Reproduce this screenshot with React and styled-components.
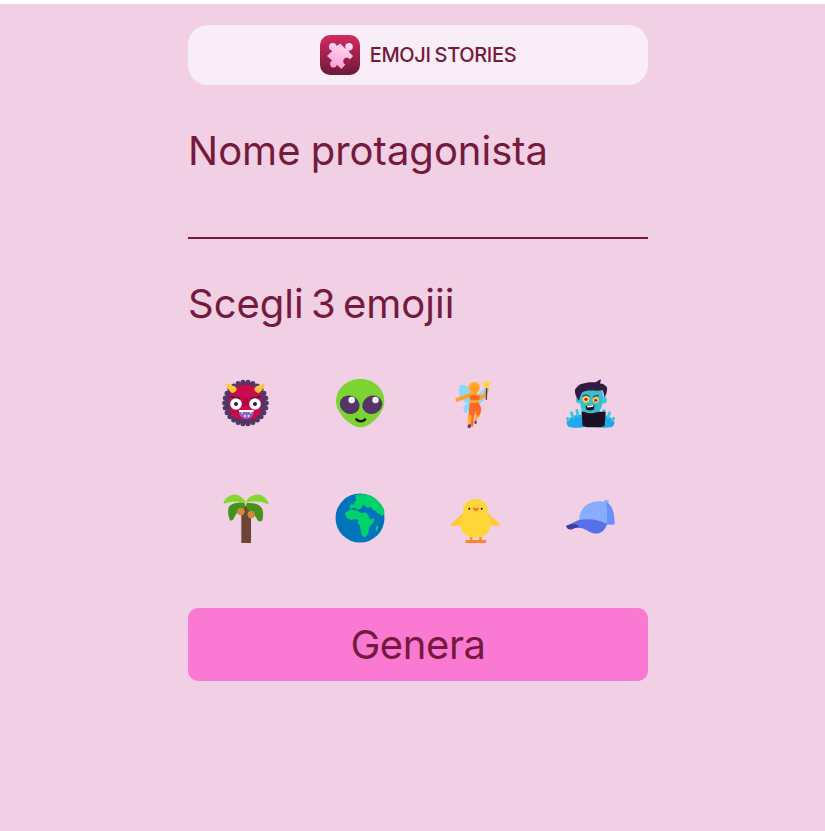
import React from "react"
import styled, { createGlobalStyle } from "styled-components"

const ink = "#751a3c"

const GlobalStyle = createGlobalStyle`
  html, body {
    margin: 0;
    padding: 0;
    background: #ffffff;
  }
  body {
    font-family: Inter, "Noto Sans", sans-serif;
    color: ${ink};
  }
`

const Page = styled.div`
  box-sizing: border-box;
  margin-top: 4px;
  height: 827px;
  padding: 21px 0 0 11px;
  background: #f1d0e5;
  display: flex;
  justify-content: center;
`

const Column = styled.main`
  width: 460px;
  display: flex;
  flex-direction: column;
`

const Header = styled.header`
  height: 60px;
  border-radius: 20px;
  background: #f9edf7;
  display: flex;
  align-items: center;
  justify-content: center;
  gap: 10px;
`

const Brand = styled.span`
  font-size: 20px;
  font-weight: 500;
  letter-spacing: -0.35px;
  word-spacing: -1px;
`

const Heading = styled.h2`
  margin: ${p => p.$top}px 0 0;
  font-size: 40px;
  line-height: 48px;
  font-weight: 400;
  word-spacing: ${p => p.$words}px;
`

const NameInput = styled.input`
  display: block;
  box-sizing: border-box;
  width: 100%;
  height: 64px;
  padding: 0;
  border: 0;
  border-bottom: 2px solid ${ink};
  background: transparent;
  outline: none;
  font: inherit;
  font-size: 32px;
  color: ${ink};
`

const EmojiGrid = styled.div`
  margin: 17px 0 0 -0.5px;
  display: grid;
  grid-template-columns: repeat(4, 115px);
  grid-auto-rows: 115px;
`

const EmojiButton = styled.button`
  padding: 0;
  border: 0;
  background: transparent;
  cursor: pointer;
  display: flex;
  align-items: center;
  justify-content: center;

  svg {
    display: block;
    width: 50px;
    height: 50px;
  }
`

const Generate = styled.button`
  margin-top: 33px;
  height: 73px;
  border: 0;
  border-radius: 10px;
  background: #fa7ad3;
  color: ${ink};
  font-family: inherit;
  font-size: 40px;
  font-weight: 400;
  letter-spacing: -0.4px;
  cursor: pointer;
`

const Logo = () => (
  <svg width="40" height="40" viewBox="0 0 40 40" aria-hidden="true">
    <defs>
      <linearGradient id="logoBack" x1="0" y1="0" x2="0" y2="1">
        <stop offset="0" stopColor="#d42a60" />
        <stop offset="1" stopColor="#6c1a38" />
      </linearGradient>
      <linearGradient id="logoPiece" gradientUnits="userSpaceOnUse" x1="26" y1="8" x2="16" y2="34">
        <stop offset="0" stopColor="#ffdcf3" />
        <stop offset="1" stopColor="#ff9dd8" />
      </linearGradient>
    </defs>
    <rect width="40" height="40" rx="10" fill="url(#logoBack)" />
    <g fill="url(#logoPiece)">
      <path d="M20 8.500L33 21 21.500 34 7 21z" />
      <circle cx="12.700" cy="11.700" r="3.800" />
      <circle cx="29" cy="11.700" r="3.800" />
      <circle cx="13.500" cy="29" r="3.400" />
      <path d="M12 13l6-3 2 8-8 2zM28 12l2 8-8 0z" />
    </g>
    <circle cx="26.800" cy="26.300" r="3.500" fill="#9c1f4a" />
  </svg>
)

const Ogre = () => (
  <svg viewBox="0 0 50 50" aria-hidden="true">
    <circle cx="25.500" cy="25" r="21" fill="#533566" />
    {Array.from({ length: 26 }, (_, i) => {
      const a = (i / 26) * Math.PI * 2
      return (
        <circle
          key={i}
          cx={25.5 + Math.cos(a) * 20.8}
          cy={25 + Math.sin(a) * 20.8}
          r="2.500"
          fill="#533566"
        />
      )
    })}
    <path fill="#ca0b4a" d="M10 14c3-5 9-7 15.500-7S38 9 41 14c.5 6 .3 16-.5 20-1 5-6 7.500-15 7.500S11.500 39 10.500 34C9.700 30 9.500 20 10 14z" />
    <path fill="#a8093f" d="M23.500 20h4l2.500 8h-9z" />
    <path fill="#ffc83d" d="M6 5l9 3.500c1 .8 1.800 2 1.700 3.200-.8 1.700-2.400 3.100-4.700 3.300C8.500 12.500 6.700 9 6 5zM45 5l-9 3.500c-1 .8-1.800 2-1.700 3.200.8 1.700 2.400 3.100 4.700 3.300 3.500-2.500 5.300-6 6-10z" />
    <path fill="none" stroke="#321b41" strokeWidth="1.300" d="M10.500 18.500l10 2M40.500 18.500l-10 2" />
    <circle cx="16" cy="26" r="5.800" fill="#fff" />
    <circle cx="35" cy="26" r="5.800" fill="#fff" />
    <circle cx="16" cy="26" r="2" fill="#321b41" />
    <circle cx="35" cy="26" r="2" fill="#321b41" />
    <path fill="#8d65c5" d="M19 32.500h14.500c.5 4-2 8.500-7.200 8.500S18.500 36.500 19 32.500z" />
    <path fill="#fff" d="M19 32h14.500v2H31.500l-.7 2-.8-2H23l-.8 2-.7-2H19z" />
    <circle cx="25" cy="38" r="1" fill="#f4f4f4" />
    <circle cx="28.500" cy="38" r="1" fill="#f4f4f4" />
  </svg>
)

const Alien = () => (
  <svg viewBox="0 0 50 50" aria-hidden="true">
    <path fill="#7bd431" d="M25.500 1C39 1 49.300 10.500 49.300 23.500c0 12-14.500 25.800-23.800 25.800S1 35.500 1 23.500C1 10.500 12 1 25.500 1z" />
    <ellipse cx="14.700" cy="26.700" rx="10.200" ry="9" fill="#533566" transform="rotate(28 14.700 26.700)" />
    <ellipse cx="37.300" cy="26.700" rx="10.200" ry="9" fill="#533566" transform="rotate(-28 37.300 26.700)" />
    <circle cx="16.700" cy="22" r="3.200" fill="#fff" />
    <circle cx="40.500" cy="22" r="3.200" fill="#fff" />
    <path fill="none" stroke="#1c1024" strokeWidth="2.600" strokeLinecap="round" d="M21.500 41.500c2.500 2.300 6 2.300 8.500 0" />
  </svg>
)

const Fairy = () => (
  <svg viewBox="0 0 50 50" aria-hidden="true">
    <path fill="#8ad9fb" d="M10 7c6-1 11 3 13 12l-1 7c-5 0-11-3-12.500-9C9 13 9 10 10 7z" />
    <path fill="#8ad9fb" d="M36 9c-3 3-7 6-9 10l1 7c4-1 7-4 8-8 .500-3 .5-6 0-9z" />
    <path fill="#8ad9fb" d="M20 25l-4 1c-3 2-3.500 6-1 9 2 .5 4-2 5-5z" />
    <path fill="#ffb02e" d="M18.500 9.500c0-3.500 2.800-5.500 5.800-5.500s5.700 2 5.700 5.500-2.500 4.500-3.500 6h-4.500c-1-1.500-3.500-2.500-3.500-6z" />
    <circle cx="24.300" cy="10.500" r="4.200" fill="#ff9f2e" />
    <path fill="#ff9f2e" d="M21.500 14.500h5.500l1 3.500 6-2 2.500-5.500 2.500.6-3 8.500-7.500 3-.8 3.500h-7.500l-.7-6.500-13 4.500-1.200-3.500 13.200-5z" />
    <path fill="#ff6723" d="M19.500 17.500h10.500l-1 5h-8.500zM19.800 24.500h9l.5 1.500c1.700 2 2.200 5 1.700 7.500l-2.400 6-3-.5.800-6.500-2.500 6-.7 10-3.700-.5-.7-9c-.2-4 .3-9 1-14.500z" />
    <path fill="#ffb02e" d="M20 22.500h9v2h-9zM18 36.500l3.700 0-.8 11-3-.2zM25.500 37l3 .6-2 5.500-2-.5z" />
    <path fill="#533566" d="M18 46.500h3l-.3 3.200h-3.200zM24.800 42.500l2 .5-.5 3-2-.5z" />
    <path fill="#ffd637" d="M36.500 1.500l1.500 3 3.300.5-2.400 2.300.6 3.200-3-1.600-3 1.600.6-3.200-2.400-2.300 3.300-.5z" />
    <path fill="#533566" d="M36 10h1.300l-.3 12h-1.200z" />
  </svg>
)

const Zombie = () => (
  <svg viewBox="0 0 50 50" aria-hidden="true">
    <path fill="#1fa9ec" d="M2 43c3-4 9-7 15-6l4 8-1 4c-5 1-12 1-16 0-2-1.500-3-4-2-6zM49 43c-3-4-9-7-15-6l-4 8 1 4c5 1 12 1 16 0 2-1.500 3-4 2-6z" />
    <path fill="none" stroke="#3dc8dc" strokeWidth="3" strokeLinecap="round" d="M3.500 42l-1-1.500M8 39l-1.500-4M13 37.500l-1-5M18 38l-.5-5M47.500 42l1-1.500M43 39l1.500-4M38 37.500l1-5M33 38l.5-5" />
    <path fill="#1c1024" d="M16.700 33.700h24l-1 14-4 1.600H21.500l-4-1.600z" />
    <circle cx="14.300" cy="22" r="3.600" fill="#3dc8dc" />
    <circle cx="38.300" cy="22" r="3.600" fill="#3dc8dc" />
    <path fill="#38bfcb" d="M15.500 10c6-3.500 17-3.500 21.500.5 1 5 1 13 0 17-.7 4-3.500 7.700-10.800 7.700-7 0-10-3-10.700-7.500-.7-5-1-12.700 0-17.700z" />
    <path fill="#321b41" d="M14 23c-2-2.500-4.500-7-4-11 .3-2 2.500-3 3.500-4.500 3-2.500 6.500-2 9.500-3 3-1 6 .5 8-.500 2-1 3-2.500 5-2.500l-1 4c3 0 6 2 7 4 .5 3-1 8-2.500 10-.5-3-1-6-2-7.500-3 1-7 .5-12 .5-3.500 0-6 .5-8.500 2-1.200 2.500-2.500 5.500-3 8.500z" />
    <circle cx="21" cy="21.300" r="3.400" fill="#ffd637" />
    <circle cx="21" cy="21.300" r="1.600" fill="#ca0b4a" />
    <circle cx="30.700" cy="22" r="3" fill="#ffd637" />
    <circle cx="30.700" cy="22.300" r="1.500" fill="#ca0b4a" />
    <path fill="none" stroke="#533566" strokeWidth="1.200" d="M17.500 18.500c2-1.500 5-1.500 7 0M28 19.500c2-2 4.500-2.500 6-1.500" />
    <path fill="#1c1024" d="M20.500 28l9-1.300-.5 5c-2.500 1-5.500 1-7.500 0z" />
    <path fill="#fff" d="M22 28l6.500-1-.3 1.800-5.700.7z" />
  </svg>
)

const Palm = () => (
  <svg viewBox="0 0 50 50" aria-hidden="true">
    <path fill="#6d4534" d="M21.300 13h9.700v37h-9.700z" />
    <path fill="#44911b" d="M24 9.500c-6-.5-11 .5-14 3-3 3.500-2 9.500 0 15 1.700.3 3-.5 4-2 1-4 5-8 10-10 2-2 1.500-4.500 0-6zM27 10c5-.500 10 .5 13.500 3.500 3 3 3 8 2 13.500-1 1.500-3 1.800-4.500.8-2-4-5.500-8.500-10-10.800-2-1.500-2.500-5 -1-7z" />
    <path fill="#86d72f" d="M3.500 10c1-4 5-7.500 10-8.500 4-.5 9 2 11.500 6.500l.5 2.500C19 8 11 8 5 10.500c-1 .3-1.500 .2-1.500-.5zM26 10l.3-2c3-4.500 8-7 12.500-6.500 5 1 9 5 9.700 9 0 .7-.5.800-1.500.5C41 8 33 8 26 10z" />
    <circle cx="21" cy="18.500" r="3.700" fill="#d3883e" />
    <circle cx="31.200" cy="21.500" r="3.700" fill="#d3883e" />
  </svg>
)

const Earth = () => (
  <svg viewBox="0 0 50 50" aria-hidden="true">
    <circle cx="25" cy="25" r="24.500" fill="#0074ba" />
    <path fill="#00d26a" d="M20 2c4-1.200 12-1.200 16 1 5 2.500 10 7 12.500 12 .8 2 1 4 1 6l-2.500 2-2-2-3-1-1-2-3-1-1.500-2.500h-5l-2-2.500-2 .5-1.500 3-3 1-4.500-2-3 1.500-1-2.500 2-2.500 3 .5-.5-2.500 2.500-1.500z" />
    <path fill="#00d26a" d="M10 20l5.500-3.500 7 1 3 2.500 4.500-.5 2.500 1.500 2.500 5c1.500.5 3 0 4-1.500l.5 2c-1 3.500-3.500 5-5 7.500-1 2.500-.5 5-2 7.500l-2 2.500-3-.5-1.500-4-1-7-2-2.500.5-3-3-1-4.500 1-4-2-2-4z" />
    <path fill="#00d26a" d="M42 31.500l1.500 3-1.500 4-1.500-2z" />
  </svg>
)

const Chick = () => (
  <svg viewBox="0 0 50 50" aria-hidden="true">
    <path fill="#ffc83d" d="M13.500 19.500L1 31c-.8 1-.5 2 1 2 4 .2 8-.5 11-2.500zM37.500 19.500L50 31c.8 1 .5 2-1 2-4 .2-8-.5-11-2.500z" />
    <path fill="#ff822d" d="M20 42h2.400v6H20zM29.200 42h2.500v6h-2.500z" />
    <path fill="#ff822d" d="M16 47h19.500c.8 0 1 3 0 3H16c-1 0-1-3 0-3z" />
    <path fill="#ffd637" d="M25.500 6c6.800 0 12.200 4.700 12.200 11 0 1.700-.3 3.200-.8 4.500 2.500 3 3.800 6 3.800 9.500 0 8-6 13.700-15.200 13.700S10 39 10 31c0-3.500 1.300-6.500 3.800-9.500-.5-1.300-.8-2.800-.8-4.500C13 10.700 18.700 6 25.500 6z" />
    <circle cx="19.300" cy="15.700" r="1" fill="#1c1024" />
    <circle cx="31.700" cy="15.700" r="1" fill="#1c1024" />
    <path fill="#ff822d" d="M23 14.700h5.500c.6 0 .8.500.5 1l-1.700 2.600h-2.900l-1.800-2.600c-.3-.5-.2-1 .4-1z" />
  </svg>
)

const Cap = () => (
  <svg viewBox="0 0 50 50" aria-hidden="true">
    <path fill="#87adff" d="M14 27c.5-10 7-17.500 17-18.500 5-.5 9.500 0 13 2.500 3.500 3 5.500 9 5.500 20.500H14z" />
    <path fill="#6b8dff" d="M41 9.500c5 1.500 8.500 8 8.500 22H41.500c1-7 1-15-.5-22z" />
    <path fill="#87adff" d="M39 8c.500-1.500 3.500-1.500 4.500 0l.5 2h-5z" />
    <path fill="#5570e8" d="M14 27c9-2 20-.5 28 4-2 7-7 10-12 9.500-5-.5-8-3.500-12-5-3-1-8-1-13 .500-3-.5-4-2-4-2.500 3-2 8-4.500 13-6.500z" />
    <path fill="#3f3a9c" d="M1.500 32.500c3-1.500 7.500-1.500 10-1 1 .8 2.500 2 2.500 2.500-3 .5-5 1.500-7.500 2.500-3 .5-5-1-5-4z" />
  </svg>
)

const emojis = [
  { name: "ogre", Icon: Ogre },
  { name: "alieno", Icon: Alien },
  { name: "fata", Icon: Fairy },
  { name: "zombie", Icon: Zombie },
  { name: "palma", Icon: Palm },
  { name: "terra", Icon: Earth },
  { name: "pulcino", Icon: Chick },
  { name: "cappello", Icon: Cap },
]

const App = () => (
  <>
    <GlobalStyle />
    <Page>
      <Column>
        <Header>
          <Logo />
          <Brand>EMOJI STORIES</Brand>
        </Header>
        <Heading $top={42} $words={-1}>Nome protagonista</Heading>
        <NameInput aria-label="Nome protagonista" />
        <Heading $top={41} $words={-4}>Scegli 3 emojii</Heading>
        <EmojiGrid>
          {emojis.map(({ name, Icon }) => (
            <EmojiButton key={name} aria-label={name}>
              <Icon />
            </EmojiButton>
          ))}
        </EmojiGrid>
        <Generate>Genera</Generate>
      </Column>
    </Page>
  </>
)

export default App
